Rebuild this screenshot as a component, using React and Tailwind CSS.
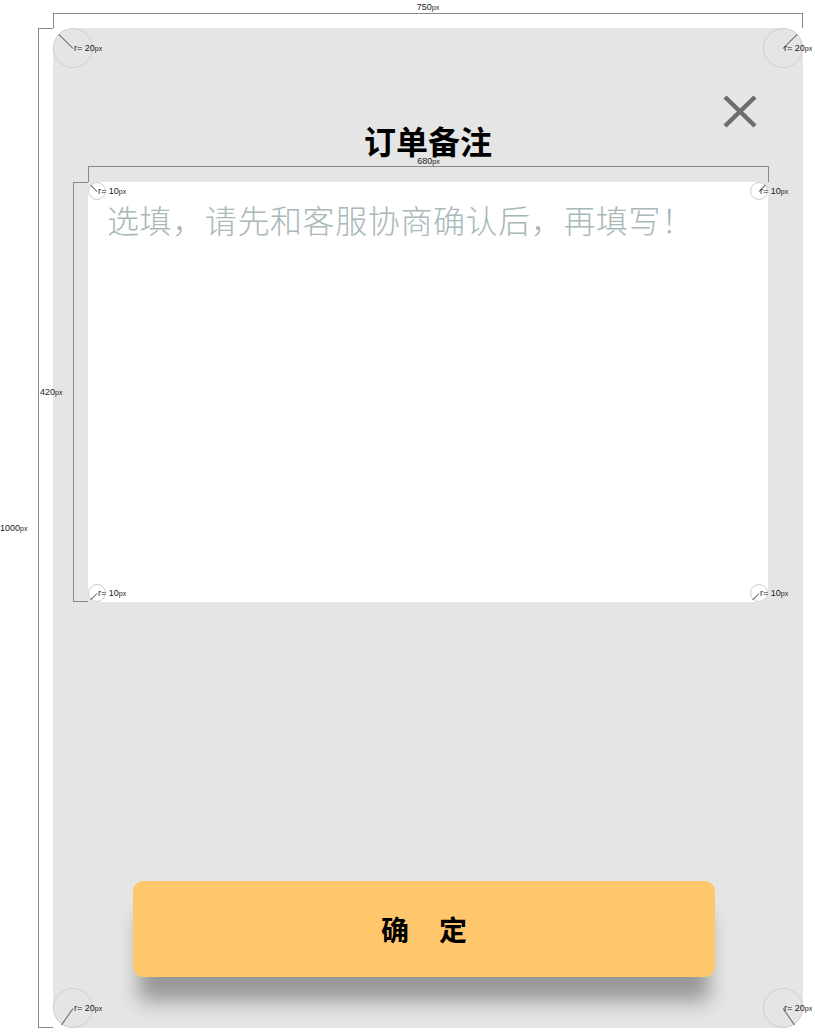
import { useState } from 'react';

const specFont = { fontFamily: '"Liberation Sans", Arial, sans-serif' };

// dimension label, "px" drawn smaller like the design spec
function Dim({ value }) {
  return (
    <span className="whitespace-nowrap text-[9px] leading-none text-[#222]" style={specFont}>
      {value}
      <span className="text-[7px]">px</span>
    </span>
  );
}

// corner radius marker: circle + radius line + label
function Radius({ size, label, lineClass, className = '' }) {
  return (
    <div className={`absolute ${className}`} style={{ width: size, height: size }}>
      <div className="absolute inset-0 rounded-full border border-[#cfcfcf]" />
      <div className={`absolute left-1/2 top-1/2 h-px bg-[#666] origin-left ${lineClass}`} style={{ width: size / 2 }} />
      <span
        className="absolute left-1/2 top-1/2 -translate-y-1/2 whitespace-nowrap pl-[1px] text-[9px] leading-none text-[#222]"
        style={specFont}
      >
        r= {label}
        <span className="text-[7px]">px</span>
      </span>
    </div>
  );
}

export default function App() {
  const [note, setNote] = useState('');

  return (
    <div className="relative w-[815px] h-[1035px] bg-white overflow-hidden" style={{ fontFamily: '"Noto Sans CJK SC", "Noto Sans", sans-serif' }}>
      {/* width spec 750 */}
      <div className="ml-[53px] w-[750px] h-[28px] flex flex-col items-center">
        <div className="h-[13px] pt-[2px] text-[9px] leading-none"><Dim value="750" /></div>
        <div className="w-full flex-1 border-x border-t border-[#8a8a8a]" />
      </div>

      <div className="flex">
        {/* height spec 1000 */}
        <div className="w-[53px] h-[1000px] flex items-center">
          <div className="w-[38px] text-[9px] leading-none"><Dim value="1000" /></div>
          <div className="w-[15px] h-full border-l border-y border-[#8a8a8a]" />
        </div>

        {/* the sheet */}
        <div className="relative w-[750px] h-[1000px] rounded-[20px] bg-[#e5e5e5] flex flex-col">
          <button className="absolute right-[46px] top-[67px] w-[34px] h-[33px]">
            <svg viewBox="0 0 34 33" className="w-full h-full">
              <path d="M2 2 L32 31 M32 2 L2 31" stroke="#6d6d6d" strokeWidth="4.5" />
            </svg>
          </button>

          <h2 className="mt-[92px] h-[40px] leading-[40px] text-center text-[32px] font-bold text-black">订单备注</h2>

          {/* 680 spec */}
          <div className="ml-[35px] w-[681px] h-[22px] flex flex-col items-center">
            <div className="h-[6px] -mt-[4px] mb-[4px] relative z-10 text-[9px] leading-none"><Dim value="680" /></div>
            <div className="w-full flex-1 border-x border-t border-[#8a8a8a]" />
          </div>

          <div className="flex">
            {/* 420 spec */}
            <div className="w-[35px] h-[420px] flex items-center">
              <div className="w-[20px] -ml-[13px] mr-[13px] text-[9px] leading-none"><Dim value="420" /></div>
              <div className="w-[15px] h-full border-l border-y border-[#8a8a8a]" />
            </div>

            <div className="w-[680px] h-[420px] rounded-[10px] bg-white">
              <textarea
                value={note}
                onChange={(e) => setNote(e.target.value)}
                placeholder="选填，请先和客服协商确认后，再填写！"
                className="w-full h-full resize-none bg-transparent pl-[19px] pt-[15px] pr-4 text-[32px] font-light tracking-[0.6px] leading-[45px] text-[#444] placeholder:text-[#a9b8b8] outline-none"
              />
            </div>
          </div>

          <button className="mt-[279px] ml-[80px] w-[582px] h-[96px] rounded-[10px] bg-[#fec76b] flex items-center justify-center gap-[30px] text-[28px] font-bold text-black shadow-[0_30px_20px_-6px_rgba(0,0,0,0.34)]">
            <span>确</span>
            <span>定</span>
          </button>
        </div>
      </div>

      {/* sheet corner radii */}
      <Radius size={40} label="20" lineClass="rotate-[225deg]" className="left-[53px] top-[28px]" />
      <Radius size={40} label="20" lineClass="-rotate-45" className="left-[763px] top-[28px]" />
      <Radius size={40} label="20" lineClass="rotate-[125deg]" className="left-[53px] top-[988px]" />
      <Radius size={40} label="20" lineClass="rotate-[55deg]" className="left-[763px] top-[988px]" />

      {/* box corner radii */}
      <Radius size={18} label="10" lineClass="rotate-[225deg]" className="left-[88px] top-[182px]" />
      <Radius size={18} label="10" lineClass="-rotate-45" className="left-[750px] top-[182px]" />
      <Radius size={18} label="10" lineClass="rotate-[135deg]" className="left-[88px] top-[584px]" />
      <Radius size={18} label="10" lineClass="rotate-[135deg]" className="left-[750px] top-[584px]" />
    </div>
  );
}
